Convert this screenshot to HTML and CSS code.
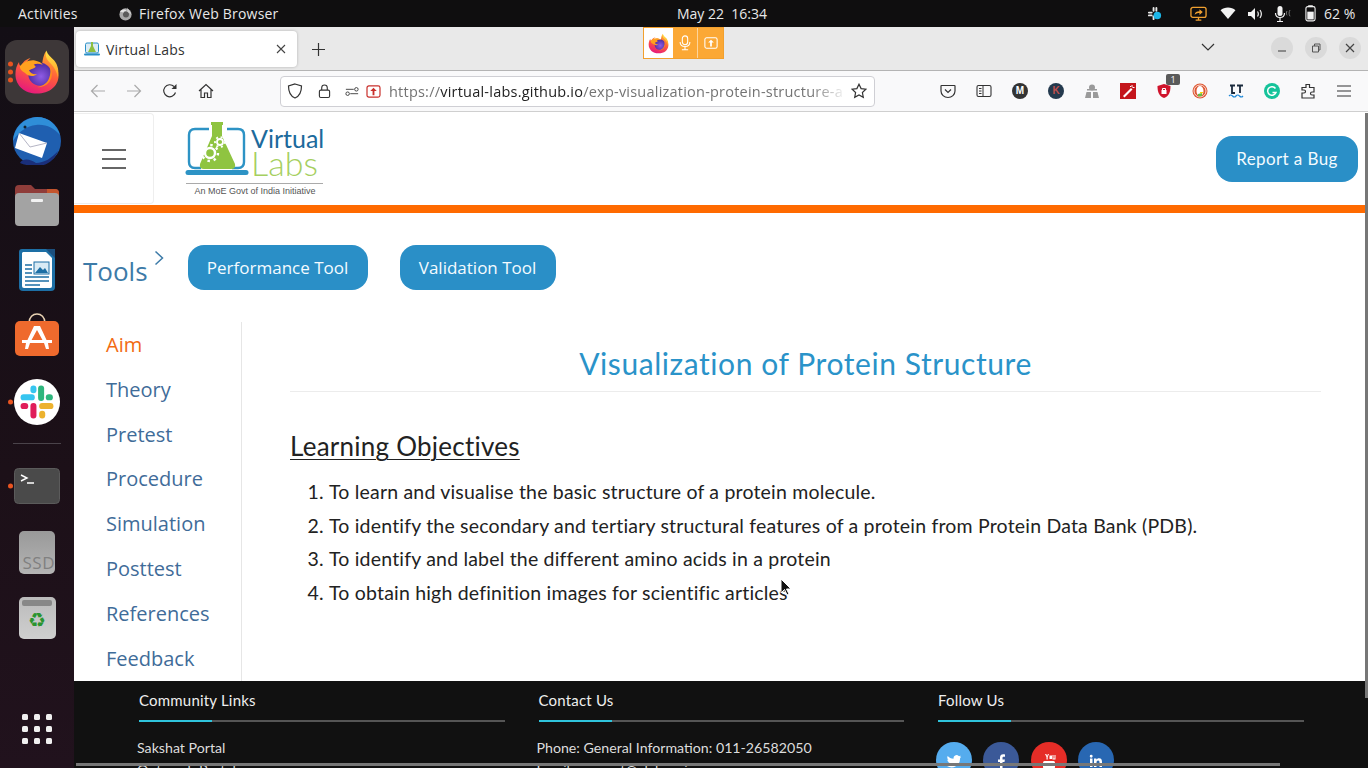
FILE: index.html
```html
<!DOCTYPE html>
<html lang="en">
<head>
  <meta charset="UTF-8" />
  <title>Virtual Labs</title>
  <link rel="stylesheet" href="styles.css">
</head>
<body>
  <!-- shared icons -->
  <svg class="defs" width="0" height="0" aria-hidden="true">
    <defs>
      <linearGradient id="ffBody" x1="0.7" y1="0" x2="0.3" y2="1">
        <stop offset="0" stop-color="#ffb02e"/>
        <stop offset="0.5" stop-color="#ff5a3c"/>
        <stop offset="1" stop-color="#e5177f"/>
      </linearGradient>
      <linearGradient id="ffFlame" x1="0.5" y1="0" x2="0.5" y2="1">
        <stop offset="0" stop-color="#ffe84a"/>
        <stop offset="1" stop-color="#ff9a25"/>
      </linearGradient>
      <radialGradient id="ffCore" cx="0.55" cy="0.6" r="0.6">
        <stop offset="0" stop-color="#8f5ce6"/>
        <stop offset="1" stop-color="#4b2a9e"/>
      </radialGradient>
      <symbol id="firefox" viewBox="0 0 64 64">
        <path d="M45 2c-1 7 3 10 8 15 6 6 9 14 9 20 0 15-13 25-30 25S2 51 2 35c0-7 2-13 5-17 0 3 1 5 3 6 2-6 7-10 13-11-4 3-6 6-6 7 8-4 16-3 22 2 1-8 2-14 6-20z" fill="url(#ffBody)"/>
        <path d="M45 2c-2 8 0 12 6 18 5 5 9 12 10 20 2-9 0-18-5-24C51 11 47 8 45 2z" fill="url(#ffFlame)"/>
        <circle cx="36" cy="35" r="16" fill="url(#ffCore)"/>
        <path d="M8 24c5-6 13-9 21-8 5 1 9 3 11 6-5-2-10-2-13 0 2 1 3 2 3 3-3 3-8 3-9 5 2 4 6 6 11 5-5 4-12 3-17-2C11 31 8 28 8 24z" fill="#ffa11f"/>
        <path d="M50 24c4 7 4 16-1 22-4 5-11 8-17 7 8-1 15-6 17-13 2-5 2-11 1-16z" fill="#ff8a1f"/>
      </symbol>
    </defs>
  </svg>

  <!-- top bar of the desktop -->
  <header class="topbar">
    <div class="topbar-left">
      <span class="activities">Activities</span>
      <svg class="topbar-ff" viewBox="0 0 16 16"><circle cx="8" cy="9" r="6.500" fill="#a9a9a9"/><circle cx="8.500" cy="9" r="3.200" fill="#5a5a5a"/><path d="M10 1c0 3 4 4 4 8l-4-3z" fill="#cfcfcf"/><path d="M2 6c2-3 6-3 7-1-2 0-3 1-3 2z" fill="#e2e2e2"/></svg>
      <span class="appname">Firefox Web Browser</span>
    </div>
    <div class="clock">May 22&nbsp; 16:34</div>
    <div class="tray">
      <svg class="tray-slack" viewBox="0 0 16 16"><g fill="#e8e8e8"><rect x="1" y="6" width="5" height="2" rx="1"/><rect x="6" y="1" width="2" height="5" rx="1"/><rect x="9" y="1" width="2" height="5" rx="1"/><rect x="1" y="9" width="5" height="2" rx="1"/><rect x="6" y="10" width="2" height="5" rx="1"/></g><circle cx="11" cy="10" r="4" fill="#1cb6e8"/></svg>
      <svg class="tray-share" viewBox="0 0 18 16"><rect x="1" y="1" width="16" height="10.500" rx="2" fill="none" stroke="#f0a030" stroke-width="1.400"/><path d="M5 9c0-3 2-4 5-4V3l3.500 3L10 9V7C8 7 6 7.500 5 9z" fill="#f0a030"/><path d="M6 14.500h6M9 12v2" stroke="#f0a030" stroke-width="1.400"/></svg>
      <svg class="tray-wifi" viewBox="0 0 16 14"><path d="M0 3.500C4-.5 12-.5 16 3.500L8 13z" fill="#f2f2f2"/></svg>
      <svg class="tray-vol" viewBox="0 0 16 14"><path d="M1 5h3l4-4v12L4 9H1z" fill="#f2f2f2"/><path d="M10.500 4.500c1 1.500 1 3.500 0 5M13 3c1.700 2.500 1.700 5.500 0 8" fill="none" stroke="#f2f2f2" stroke-width="1.200"/></svg>
      <svg class="tray-mic" viewBox="0 0 18 18"><rect x="3.500" y="1" width="5" height="10" rx="2.500" fill="#f2f2f2"/><path d="M1.500 8c0 3 2 4.500 4.500 4.500S10.500 11 10.500 8M6 12.500V16M3 16.500h6" fill="none" stroke="#f2f2f2" stroke-width="1.200"/><path d="M13 6c-.8 1.300-.8 3 0 4.300M16 5c-1.200 2-1.200 4.300 0 6.300" fill="none" stroke="#777" stroke-width="1"/></svg>
      <svg class="tray-bat" viewBox="0 0 12 18"><rect x="3.500" y="0" width="5" height="2" fill="#f2f2f2"/><rect x="1" y="1.500" width="10" height="15.500" rx="2" fill="none" stroke="#f2f2f2" stroke-width="1.200"/><rect x="2.500" y="7" width="7" height="8.500" fill="#f2f2f2"/></svg>
      <span class="battery">62 %</span>
    </div>
  </header>

  <div class="desktop">
    <!-- dock -->
    <nav class="dock">
      <div class="dock-slot is-active">
        <span class="run-dots"><i></i><i></i><i></i></span>
        <svg class="dock-ff"><use href="#firefox"/></svg>
      </div>
      <div class="dock-slot">
        <svg class="dock-icon dock-tb" viewBox="0 0 50 50">
          <circle cx="25" cy="26" r="24" fill="#1f5fb0"/>
          <path d="M1 26C2 12 12 3 25 2c12 0 20 8 23 18-6-7-14-11-24-10C15 11 7 16 1 26z" fill="#2f8ed8"/>
          <path d="M8 48c3-5 10-4 16 0 8 0 16-5 22-12-4 10-12 15-21 15-7 0-12-1-17-3z" fill="#1a2f7a"/>
          <path d="M7 18l28 10-5 15L3 33z" fill="#fff"/>
          <path d="M7 18l11 14 17-4" fill="none" stroke="#b5b5c5" stroke-width="1"/>
          <circle cx="13" cy="12" r="1.500" fill="#123"/>
        </svg>
      </div>
      <div class="dock-slot">
        <svg class="dock-icon" viewBox="0 0 46 46">
          <path d="M1 8q0-4 4-4h12l4 4h20q4 0 4 4v12H1z" fill="#8f3d3a"/>
          <path d="M33 8h8q4 0 4 4v10H33z" fill="#c4552d"/>
          <rect x="1" y="12" width="44" height="33" rx="4" fill="#a3a3a3"/>
          <rect x="17" y="18" width="12" height="3" rx="1" fill="#f2f2f2"/>
        </svg>
      </div>
      <div class="dock-slot">
        <svg class="dock-icon dock-writer" viewBox="0 0 38 44">
          <path d="M4 1h26l7 7v31q0 4-4 4H5q-4 0-4-4V4q0-3 3-3z" fill="#1d6fa5"/>
          <path d="M5 4h23l6 6v28q0 2-2 2H6q-2 0-2-2V5z" fill="#fff"/>
          <path d="M28 1l9 9V1z" fill="#1c4f7d"/>
          <path d="M7 17h7M7 21h7M7 25h7M7 29h24M7 33h24M7 37h15" stroke="#1d6fa5" stroke-width="1.600"/>
          <rect x="16" y="14" width="15" height="12" fill="#d9ebf5" stroke="#1d6fa5"/>
          <path d="M17 25l5-6 3 3 2-2 3 5z" fill="#1d6fa5"/>
        </svg>
      </div>
      <div class="dock-slot">
        <svg class="dock-icon" viewBox="0 0 46 46">
          <path d="M15 10c0-12 16-12 16 0" fill="none" stroke="#e9d3b4" stroke-width="1.500"/>
          <rect x="1" y="8" width="44" height="35" rx="5" fill="#ef6a2d"/>
          <path d="M20 13h6l7 15h-4l-6-11-6 11h-4z" fill="#fff"/>
          <rect x="8" y="27" width="30" height="3" fill="#fff"/>
          <path d="M12 30h4l-2 6h-3zM30 30h4l1 6h-3z" fill="#fff"/>
        </svg>
      </div>
      <div class="dock-slot">
        <span class="run-dots"><i></i></span>
        <svg class="dock-icon" viewBox="0 0 42 42">
          <circle cx="21" cy="21" r="21" fill="#fff"/>
          <rect x="6" y="14" width="13" height="5.500" rx="2.700" fill="#36c5f0"/>
          <rect x="15" y="6" width="5.500" height="7" rx="2.700" fill="#36c5f0"/>
          <rect x="22" y="6" width="5.500" height="14" rx="2.700" fill="#2eb67d"/>
          <rect x="29" y="14" width="6.500" height="5.500" rx="2.700" fill="#2eb67d"/>
          <rect x="23" y="22" width="13" height="5.500" rx="2.700" fill="#ecb22e"/>
          <rect x="23" y="29" width="5.500" height="7" rx="2.700" fill="#ecb22e"/>
          <rect x="15" y="22" width="5.500" height="14" rx="2.700" fill="#e01e5a"/>
          <rect x="6" y="22" width="7" height="5.500" rx="2.700" fill="#e01e5a"/>
        </svg>
      </div>
      <hr class="dock-sep" />
      <div class="dock-slot">
        <span class="run-dots"><i></i></span>
        <svg class="dock-icon" viewBox="0 0 46 36">
          <rect x="0.500" y="0.500" width="45" height="35" rx="4" fill="#4a4a4a" stroke="#5b5b5b"/>
          <path d="M7 7l6 3-6 3M13 15h7" fill="none" stroke="#fff" stroke-width="1.400"/>
        </svg>
      </div>
      <div class="dock-slot">
        <div class="ssd">SSD</div>
      </div>
      <div class="dock-slot">
        <div class="trash"><span class="trash-lid"></span><span class="recycle">♻</span></div>
      </div>
      <div class="dock-grid">
        <i></i><i></i><i></i><i></i><i></i><i></i><i></i><i></i><i></i>
      </div>
    </nav>

    <!-- firefox window -->
    <main class="window">
      <div class="tabbar">
        <div class="tab">
          <svg class="favicon" viewBox="0 0 16 16"><rect x="1.500" y="2" width="13" height="10" rx="1.500" fill="#dcecf5" stroke="#2a8fc7"/><path d="M7 1h2v4l3 6H4l3-6z" fill="#8dbf3f"/><rect x="0" y="12.500" width="16" height="2" rx="1" fill="#2a8fc7"/></svg>
          <span class="tab-title">Virtual Labs</span>
          <svg class="tab-close" viewBox="0 0 10 10"><path d="M1 1l8 8M9 1l-8 8" stroke="#444" stroke-width="1.100"/></svg>
        </div>
        <svg class="newtab" viewBox="0 0 12 12"><path d="M6 0v12M0 6h12" stroke="#333" stroke-width="1.100"/></svg>
        <svg class="tabs-down" viewBox="0 0 14 8"><path d="M1 1l6 6 6-6" fill="none" stroke="#333" stroke-width="1.200"/></svg>
        <div class="winctl">
          <span class="winbtn"><svg viewBox="0 0 10 10"><path d="M1 8h8" stroke="#555" stroke-width="1.200"/></svg></span>
          <span class="winbtn"><svg viewBox="0 0 10 10"><path d="M1.500 3h6v6h-6zM3.500 3V1h5.500v6H7.500" fill="none" stroke="#555"/></svg></span>
          <span class="winbtn"><svg viewBox="0 0 10 10"><path d="M1 1l8 8M9 1l-8 8" stroke="#444" stroke-width="1.200"/></svg></span>
        </div>
      </div>

      <div class="toolbar">
        <span class="tb-btn"><svg viewBox="0 0 16 16"><path d="M15 8H1.500M7.500 2l-6 6 6 6" fill="none" stroke="#aaa" stroke-width="1.200"/></svg></span>
        <span class="tb-btn"><svg viewBox="0 0 16 16"><path d="M1 8h13.500M8.500 2l6 6-6 6" fill="none" stroke="#aaa" stroke-width="1.200"/></svg></span>
        <span class="tb-btn"><svg viewBox="0 0 16 16"><path d="M13.500 9.500A6 6 0 1 1 12 3.500" fill="none" stroke="#333" stroke-width="1.200"/><path d="M14.500 1v5h-5z" fill="#333"/></svg></span>
        <span class="tb-btn"><svg viewBox="0 0 16 16"><path d="M1 8l7-6.500L15 8M3 6.500V14.500h3.500V10h3v4.500H13V6.500" fill="none" stroke="#333" stroke-width="1.200"/></svg></span>
        <div class="urlbar">
          <svg class="url-shield" viewBox="0 0 16 16"><path d="M8 1l6.500 2c0 6-1.500 10-6.500 12C3 13 1.500 9 1.500 3z" fill="none" stroke="#333" stroke-width="1.200"/></svg>
          <svg class="url-lock" viewBox="0 0 14 16"><rect x="1.500" y="7" width="11" height="8" rx="1.500" fill="none" stroke="#333" stroke-width="1.200"/><path d="M4 7V4.500a3 3 0 0 1 6 0V7" fill="none" stroke="#333" stroke-width="1.200"/></svg>
          <svg class="url-perm" viewBox="0 0 16 12"><path d="M1 3.500h9M6 8.500h9" stroke="#333"/><circle cx="13" cy="3.500" r="2" fill="none" stroke="#333"/><circle cx="3" cy="8.500" r="2" fill="none" stroke="#333"/></svg>
          <svg class="url-share" viewBox="0 0 16 14"><rect x="1" y="1" width="14" height="12" rx="2" fill="#fff" stroke="#c9302c" stroke-width="1.300"/><path d="M8 3l3.500 3.500h-2.500V11H7V6.500H4.500z" fill="#c9302c"/></svg>
          <div class="url-text">https://<b>virtual-labs.github.io</b>/exp-visualization-protein-structure-a</div>
          <svg class="url-star" viewBox="0 0 16 16"><path d="M8 1.200l2.100 4.400 4.800.6-3.500 3.300.9 4.800L8 12l-4.300 2.300.9-4.800L1.100 6.200l4.800-.6z" fill="none" stroke="#333" stroke-width="1.200"/></svg>
        </div>
        <div class="tb-right">
          <span class="tb-btn"><svg viewBox="0 0 16 16"><path d="M1.500 2.500h13q.5 0 .5 .5v5a7 6.500 0 0 1-14 0V3q0-.5 .5-.5z" fill="none" stroke="#333" stroke-width="1.200"/><path d="M5 6.500l3 3 3-3" fill="none" stroke="#333" stroke-width="1.200"/></svg></span>
          <span class="tb-btn"><svg viewBox="0 0 16 14"><rect x="1" y="1.500" width="14" height="11" rx="1.500" fill="none" stroke="#333" stroke-width="1.100"/><path d="M7 1.500v11M3 4.500h2.500M3 7h2.500M3 9.500h2.500" stroke="#333"/></svg></span>
          <span class="tb-btn"><span class="ext-round ext-m">M</span></span>
          <span class="tb-btn"><span class="ext-round ext-k">K</span></span>
          <span class="tb-btn"><svg viewBox="0 0 16 16" fill="#9a9a9a"><circle cx="8" cy="4.500" r="3"/><rect x="3" y="6" width="10" height="1.500"/><path d="M1 15l1.500-6h4.500v6zM15 15l-1.500-6H9v6z"/></svg></span>
          <span class="tb-btn"><svg viewBox="0 0 16 16"><rect width="16" height="16" fill="#c4161c"/><path d="M3 13L11 5l1.500 1.500-8 8z" fill="#fff"/><path d="M12 2v2M14.500 4.500h-2M10 3l1 1" stroke="#fff"/></svg></span>
          <span class="tb-btn ext-ublock">
            <svg viewBox="0 0 16 16"><path d="M8 1l6.500 2c0 6-1.500 10-6.500 12C3 13 1.500 9 1.500 3z" fill="#d0142c"/><rect x="5.500" y="7" width="5" height="4" fill="#fff"/><path d="M6.500 7V5.500h3V7" fill="none" stroke="#fff"/></svg>
            <span class="badge">1</span>
          </span>
          <span class="tb-btn"><svg viewBox="0 0 16 16"><circle cx="8" cy="8" r="7.500" fill="#de5833"/><circle cx="8" cy="8" r="6" fill="none" stroke="#fff" stroke-width=".8"/><ellipse cx="8" cy="8" rx="3.500" ry="5" fill="#fff"/><path d="M6 11l4-1v3l-4 .5z" fill="#65bc46"/><path d="M8 9h3v1.200H8z" fill="#fdd20a"/></svg></span>
          <span class="tb-btn"><svg viewBox="0 0 16 16"><path d="M2 2.500h5M4 2.500V10h3M9 2.500h6M12 2.500V10" fill="none" stroke="#1b2b3d" stroke-width="1.800"/><path d="M1 13q1.700-2 3.500 0t3.500 0 3.500 0 3.500 0" fill="none" stroke="#1e88d8" stroke-width="1.200"/></svg></span>
          <span class="tb-btn"><svg viewBox="0 0 16 16"><circle cx="8" cy="8" r="8" fill="#15c39a"/><path d="M11.500 5.500A4.300 4.300 0 1 0 12 9.500H8.500" fill="none" stroke="#fff" stroke-width="1.500"/></svg></span>
          <span class="tb-btn"><svg viewBox="0 0 16 16"><path d="M6 1.500h3.500v3H14V9h-2a1.500 1.500 0 0 0 0 3h2v3H2v-5h2a1.500 1.500 0 0 0 0-3H2V4.500h4z" fill="none" stroke="#333" stroke-width="1.200"/></svg></span>
          <span class="tb-btn"><svg viewBox="0 0 16 14"><path d="M1 2h14M1 7h14M1 12h14" stroke="#333" stroke-width="1.200"/></svg></span>
        </div>
      </div>

      <div class="page">
        <div class="site-header">
          <div class="burger-cell"><div class="burger"><i></i><i></i><i></i></div></div>
          <svg class="logo" viewBox="0 0 140 78">
            <path d="M24 9H10q-6 0-6 6v27q0 6 6 6h6M42 9h11q6 0 6 6v27q0 6-6 6h-6" fill="none" stroke="#2d93c5" stroke-width="2.400"/>
            <path d="M3 52.500h58" stroke="#2d93c5" stroke-width="5" stroke-linecap="round"/>
            <path d="M26 2h12v3h-1v11l13 28q1 5-4 5H19q-5 0-4-5l12-28V5h-1z" fill="#8fc441"/>
            <circle cx="25" cy="33" r="5" fill="none" stroke="#fff" stroke-width="2.400"/>
            <circle cx="25" cy="33" r="8" fill="none" stroke="#fff" stroke-width="2.400" stroke-dasharray="2.500 3.780"/>
            <circle cx="35" cy="22" r="3" fill="none" stroke="#fff" stroke-width="1.800"/>
            <circle cx="35" cy="22" r="5" fill="none" stroke="#fff" stroke-width="1.800" stroke-dasharray="2 2.720"/>
            <text x="66" y="28" class="logo-virtual">Virtual</text>
            <text x="66" y="56" class="logo-labs">Labs</text>
            <path d="M1 63.500h137" stroke="#aaa"/>
            <text x="70" y="73.500" text-anchor="middle" class="logo-tag">An MoE Govt of India Initiative</text>
          </svg>
          <a class="btn btn-bug">Report a Bug</a>
        </div>
        <div class="orange-bar"></div>

        <div class="tools-row">
          <span class="tools-label">Tools</span>
          <svg class="tools-chev" viewBox="0 0 10 16"><path d="M1.500 1.500l7 6.500-7 6.500" fill="none" stroke="#3d7ba8" stroke-width="1.500"/></svg>
          <a class="btn btn-tool btn-perf">Performance Tool</a>
          <a class="btn btn-tool btn-valid">Validation Tool</a>
        </div>

        <div class="main-row">
          <aside class="sidebar">
            <a class="side-link is-current">Aim</a>
            <a class="side-link">Theory</a>
            <a class="side-link">Pretest</a>
            <a class="side-link">Procedure</a>
            <a class="side-link">Simulation</a>
            <a class="side-link">Posttest</a>
            <a class="side-link">References</a>
            <a class="side-link">Feedback</a>
          </aside>
          <section class="content">
            <h1 class="exp-title">Visualization of Protein Structure</h1>
            <h2 class="section-title">Learning Objectives</h2>
            <ol class="objectives">
              <li>To learn and visualise the basic structure of a protein molecule.</li>
              <li>To identify the secondary and tertiary structural features of a protein from Protein Data Bank (PDB).</li>
              <li>To identify and label the different amino acids in a protein</li>
              <li>To obtain high definition images for scientific articles</li>
            </ol>
          </section>
        </div>

        <footer class="footer">
          <div class="foot-col">
            <h3 class="foot-head">Community Links</h3>
            <p class="foot-text">Sakshat Portal</p>
            <p class="foot-text">Outreach Portal</p>
          </div>
          <div class="foot-col">
            <h3 class="foot-head">Contact Us</h3>
            <p class="foot-text">Phone: General Information: 011-26582050</p>
            <p class="foot-text">Email: support@vlab.co.in</p>
          </div>
          <div class="foot-col">
            <h3 class="foot-head">Follow Us</h3>
            <div class="socials">
              <span class="social s-tw"><svg viewBox="0 0 16 16"><path d="M15 3.500c-.6.300-1.200.400-1.700.500.600-.4 1-.9 1.300-1.600-.6.300-1.200.6-1.900.7a3 3 0 0 0-5.100 2.700C5 5.700 3 4.600 1.700 3c-.8 1.400-.4 3 .9 3.900-.5 0-1-.1-1.300-.4 0 1.500 1 2.700 2.400 3-.4.100-.9.100-1.300 0 .4 1.200 1.500 2 2.800 2.100A6 6 0 0 1 1 13a8.500 8.500 0 0 0 13-7.600c.4-.5.800-1.200 1-1.900z" fill="#fff"/></svg></span>
              <span class="social s-fb"><svg viewBox="0 0 16 16"><path d="M9.500 15V9h2l.4-2.500H9.500V5c0-.8.300-1.200 1.200-1.200H12V1.500C11.700 1.400 11 1.300 10.200 1.300 8.300 1.300 7 2.500 7 4.600v1.900H5V9h2v6z" fill="#fff"/></svg></span>
              <span class="social s-yt"><svg viewBox="0 0 16 16"><path d="M4 1h1.300l.8 2 .8-2H8L6.700 4v2.500H5.500V4zM8.500 2.500h2.500V6H8.500zM11.500 2h1v3.500h1V2h1v4.500h-3z" fill="#fff"/><rect x="2" y="8" width="12" height="7.500" rx="1.500" fill="#fff"/></svg></span>
              <span class="social s-in"><svg viewBox="0 0 16 16"><path d="M2 5.500h2.500V14H2zM3.200 1.800a1.400 1.400 0 1 1 0 2.900 1.400 1.400 0 0 1 0-2.900zM6 5.500h2.400v1.200c.5-.8 1.400-1.400 2.600-1.400 2.400 0 3 1.600 3 3.700V14h-2.500V9.500c0-1-.2-2-1.400-2S8.500 8.500 8.500 9.500V14H6z" fill="#fff"/></svg></span>
            </div>
          </div>
        </footer>

        <span class="scroll-v"></span>
        <span class="scroll-h"></span>
        <svg class="cursor" viewBox="0 0 12 18"><path d="M1 1v14l3.500-3.500 2.500 5.500 2-1-2.500-5H11z" fill="#111" stroke="#fff" stroke-width="1"/></svg>
      </div>

      <!-- sharing indicator lies over the tab bar -->
      <div class="share-ind">
        <span class="share-ff"><svg><use href="#firefox"/></svg></span>
        <span class="share-cell"><svg viewBox="0 0 14 18"><rect x="4" y="1" width="6" height="10" rx="3" fill="none" stroke="#fff" stroke-width="1.200"/><path d="M1.500 8c0 3.500 2.500 5 5.500 5s5.500-1.500 5.500-5M7 13v3M3.500 16.500h7" fill="none" stroke="#fff" stroke-width="1.200"/></svg></span>
        <span class="share-cell share-last"><svg viewBox="0 0 16 14"><rect x="1" y="1" width="14" height="12" rx="2" fill="none" stroke="#fff" stroke-width="1.200"/><path d="M8 3.200l3.300 3.300H9V11H7V6.500H4.700z" fill="#fff"/></svg></span>
      </div>
    </main>
  </div>
</body>
</html>
```

FILE: styles.css
```css
/* base */
html, body {
  margin: 0;
  padding: 0;
  height: 100%;
  overflow: hidden;
}
* {
  box-sizing: border-box;
}
body {
  display: flex;
  flex-direction: column;
  font-family: "Open Sans", "Noto Sans", sans-serif;
  background: #120d12;
}
.defs {
  position: absolute;
}
svg {
  display: block;
}

/* top bar */
.topbar {
  height: 27px;
  flex: none;
  display: flex;
  align-items: center;
  background: #0f0e0f;
  color: #e8e8e8;
  font-size: 14px;
}
.topbar-left {
  width: 677px;
  padding-left: 18px;
  display: flex;
  align-items: center;
  letter-spacing: 0.200px;
}
.activities {
  width: 100px;
}
.topbar-ff {
  width: 15px;
  height: 15px;
  margin-right: 6px;
}
.clock {
  width: 100px;
  text-align: left;
  white-space: nowrap;
}
.tray {
  flex: 1;
  display: flex;
  align-items: center;
  padding-left: 370px;
}
.tray-slack { width: 15px; height: 15px; }
.tray-share { width: 17px; height: 16px; margin-left: 28px; }
.tray-wifi { width: 16px; height: 13px; margin-left: 13px; }
.tray-vol { width: 16px; height: 14px; margin-left: 11px; }
.tray-mic { width: 18px; height: 18px; margin-left: 11px; }
.tray-bat { width: 11px; height: 17px; margin-left: 13px; }
.battery { margin-left: 8px; }

/* dock */
.desktop {
  flex: 1;
  display: flex;
  min-height: 0;
}
.dock {
  width: 74px;
  flex: none;
  display: flex;
  flex-direction: column;
  align-items: center;
  padding-top: 12px;
  background: linear-gradient(180deg, #130e15 0%, #1c1018 60%, #21121d 100%);
}
.dock-slot {
  position: relative;
  width: 64px;
  height: 66px;
  display: flex;
  align-items: center;
  justify-content: center;
}
.dock-slot.is-active {
  height: 64px;
  margin: 1px 0;
  background: #3d3738;
  border-radius: 12px;
}
.dock-icon {
  width: 46px;
  height: 46px;
}
.dock-ff {
  width: 46px;
  height: 46px;
}
.dock-tb {
  width: 50px;
  height: 50px;
  margin-top: 3px;
}
.dock-writer {
  width: 38px;
  height: 44px;
}
.run-dots {
  position: absolute;
  left: 3px;
  top: 50%;
  transform: translateY(-50%);
  display: flex;
  flex-direction: column;
  gap: 3px;
}
.run-dots i {
  width: 5px;
  height: 5px;
  border-radius: 50%;
  background: #e95420;
}
.dock-sep {
  width: 48px;
  margin: 8px 0 9px;
  border: none;
  border-top: 1px solid #4a434a;
}
.ssd {
  width: 36px;
  height: 43px;
  border-radius: 5px;
  background: linear-gradient(#999, #b4b4b4);
  color: #808080;
  font-size: 17px;
  line-height: 20px;
  text-align: right;
  padding: 22px 0 0;
  overflow: hidden;
  letter-spacing: 0.500px;
}
.trash {
  width: 37px;
  height: 42px;
  border-radius: 5px;
  background: linear-gradient(#bbb, #cfcfcf);
  display: flex;
  flex-direction: column;
  align-items: center;
  padding-top: 3px;
}
.trash-lid {
  width: 30px;
  height: 6px;
  border-radius: 2px;
  background: #888;
}
.recycle {
  font-family: "DejaVu Sans", sans-serif;
  font-size: 20px;
  line-height: 28px;
  color: #2a942e;
}
.dock-grid {
  margin-top: auto;
  margin-bottom: 24px;
  display: grid;
  grid-template-columns: repeat(3, 6px);
  gap: 6px;
}
.dock-grid i {
  width: 6px;
  height: 6px;
  border-radius: 1.500px;
  background: #f0f0f0;
}

/* firefox window */
.window {
  position: relative;
  flex: 1;
  min-width: 0;
  display: flex;
  flex-direction: column;
  background: #fff;
}
.tabbar {
  height: 44px;
  flex: none;
  display: flex;
  align-items: center;
  background: #e9e9e9;
  border-bottom: 1px solid #b4b4b4;
  padding: 0 7px 0 2px;
}
.tab {
  width: 221px;
  height: 36px;
  display: flex;
  align-items: center;
  padding: 0 11px 0 8px;
  background: #fff;
  border-radius: 4px;
  box-shadow: 0 0 3px rgba(0,0,0,0.25);
  margin-top: 1px;
}
.favicon {
  width: 16px;
  height: 16px;
  margin-right: 6px;
}
.tab-title {
  flex: 1;
  font-size: 14px;
  color: #333;
  letter-spacing: 0.200px;
}
.tab-close {
  width: 10px;
  height: 10px;
}
.newtab {
  width: 13px;
  height: 13px;
  margin-left: 15px;
  margin-top: 1px;
}
.tabs-down {
  width: 14px;
  height: 8px;
  margin-left: 876px;
  margin-top: -3px;
}
.winctl {
  margin-left: auto;
  display: flex;
  gap: 12px;
  margin-top: -2px;
}
.winbtn {
  width: 22px;
  height: 22px;
  border-radius: 50%;
  background: #dadada;
  display: flex;
  align-items: center;
  justify-content: center;
}
.winbtn svg {
  width: 10px;
  height: 10px;
}
.toolbar {
  height: 41px;
  flex: none;
  display: flex;
  align-items: center;
  padding-left: 6px;
  background: #f9f9fa;
  border-bottom: 1px solid #cfcfcf;
}
.tb-btn {
  position: relative;
  width: 36px;
  height: 32px;
  flex: none;
  display: flex;
  align-items: center;
  justify-content: center;
}
.tb-btn svg {
  width: 16px;
  height: 16px;
}
.urlbar {
  width: 595px;
  height: 31px;
  margin-left: 56px;
  display: flex;
  align-items: center;
  background: #fff;
  border: 1px solid #cfcfd4;
  border-radius: 4px;
}
.urlbar svg {
  flex: none;
}
.url-shield { width: 16px; height: 16px; margin-left: 6px; }
.url-lock { width: 13px; height: 16px; margin-left: 15px; }
.url-perm { width: 14px; height: 11px; margin-left: 14px; }
.url-share { width: 15px; height: 13px; margin-left: 7px; }
.url-text {
  flex: 1;
  margin-left: 8px;
  font-size: 14.500px;
  letter-spacing: 0.220px;
  color: #737373;
  white-space: nowrap;
  overflow: hidden;
  -webkit-mask-image: linear-gradient(90deg, #000 92%, transparent);
  mask-image: linear-gradient(90deg, #000 92%, transparent);
}
.url-text b {
  font-weight: 400;
  color: #222;
}
.url-star { width: 16px; height: 16px; margin: 0 7px 0 4px; }
.tb-right {
  margin-left: auto;
  display: flex;
  padding-right: 6px;
}
.ext-round {
  width: 16px;
  height: 16px;
  border-radius: 50%;
  font-size: 10px;
  font-weight: 700;
  line-height: 16px;
  text-align: center;
  font-family: "Liberation Sans", sans-serif;
}
.ext-m { background: #333; color: #fff; }
.ext-k { background: #243a4e; color: #c0504d; }
.badge {
  position: absolute;
  top: -1px;
  right: 2px;
  width: 14px;
  height: 11px;
  border-radius: 2px;
  background: #5a5a5a;
  color: #fff;
  font-size: 9px;
  line-height: 11px;
  text-align: center;
}
.share-ind {
  position: absolute;
  left: 569px;
  top: 0;
  width: 81px;
  height: 32px;
  display: flex;
  background: #fba835;
  border: 1px solid #f2a02e;
}
.share-ff {
  width: 29px;
  display: flex;
  align-items: center;
  justify-content: center;
  background: #fff;
}
.share-ff svg {
  width: 21px;
  height: 21px;
}
.share-cell {
  width: 25px;
  display: flex;
  align-items: center;
  justify-content: center;
  border-right: 1px solid #fdd49a;
}
.share-cell svg {
  width: 14px;
  height: 16px;
}
.share-last {
  border-right: none;
}

/* page inside the browser */
.page {
  position: relative;
  flex: 1;
  min-height: 0;
  display: flex;
  flex-direction: column;
  overflow: hidden;
  background: #fff;
}
.site-header {
  height: 93px;
  flex: none;
  display: flex;
  align-items: center;
}
.burger-cell {
  width: 80px;
  height: 91px;
  display: flex;
  align-items: center;
  justify-content: center;
  border: 1px solid #eee;
  border-left: none;
  border-radius: 0 4px 4px 0;
}
.burger {
  width: 24px;
  display: flex;
  flex-direction: column;
  gap: 7px;
}
.burger i {
  height: 2px;
  background: #666;
}
.logo {
  width: 140px;
  height: 78px;
  margin-left: 31px;
}
.logo-virtual {
  font: 400 25px "Lato", sans-serif;
  fill: #1c6a9c;
}
.logo-labs {
  font: 300 34px "Lato", sans-serif;
  fill: #a6cf5f;
}
.logo-tag {
  font: 400 9px "Liberation Sans", sans-serif;
  fill: #555;
}
.btn {
  display: flex;
  align-items: center;
  justify-content: center;
  background: #2a8fc7;
  color: #f4fbff;
  border-radius: 16px;
}
.btn-bug {
  width: 142px;
  height: 46px;
  margin-left: auto;
  margin-right: 10px;
  font: 400 17px "Lato", sans-serif;
  letter-spacing: 0.400px;
}
.orange-bar {
  height: 8px;
  flex: none;
  background: #ff6a00;
}
.tools-row {
  height: 109px;
  flex: none;
  display: flex;
  align-items: flex-start;
  padding: 32px 0 0 9px;
}
.tools-label {
  font-size: 26px;
  line-height: 52px;
  color: #3d7ba8;
}
.tools-chev {
  width: 10px;
  height: 16px;
  margin: 5px 0 0 6px;
}
.btn-tool {
  height: 45px;
  font-size: 17px;
}
.btn-perf {
  width: 180px;
  margin-left: 24px;
}
.btn-valid {
  width: 156px;
  margin-left: 32px;
}
.main-row {
  height: 359px;
  flex: none;
  display: flex;
}
.sidebar {
  width: 168px;
  flex: none;
  display: flex;
  flex-direction: column;
  padding: 1px 0 0 32px;
  border-right: 1px solid #e6e6e6;
}
.side-link {
  height: 44.800px;
  flex: none;
  line-height: 44.800px;
  font-size: 20px;
  color: #3f6c99;
}
.side-link.is-current {
  color: #f26a12;
}
.content {
  flex: 1;
  padding: 0 47px 0 48px;
  font-family: "Lato", sans-serif;
  color: #222;
}
.exp-title {
  margin: 0;
  height: 70px;
  line-height: 82px;
  border-bottom: 1px solid #ececec;
  text-align: center;
  font-size: 30px;
  font-weight: 400;
  color: #2a93c9;
  letter-spacing: 0.570px;
}
.section-title {
  margin: 34px 0 0;
  font-size: 26px;
  line-height: 40px;
  font-weight: 400;
  letter-spacing: 0.250px;
  text-decoration: underline;
  text-underline-offset: 3px;
  text-decoration-thickness: 1px;
}
.objectives {
  margin: 9px 0 0;
  padding-left: 39px;
  font-size: 19.500px;
  line-height: 33.700px;
  letter-spacing: 0.190px;
}

/* footer */
.footer {
  flex: 1;
  display: flex;
  gap: 34px;
  padding: 0 0 0 65px;
  background: #111;
  color: #eee;
  font-family: "Lato", sans-serif;
}
.foot-col {
  width: 365.500px;
}
.foot-head {
  position: relative;
  margin: 0;
  height: 41px;
  line-height: 38px;
  font-size: 15px;
  font-weight: 400;
  letter-spacing: 0.200px;
  border-bottom: 2px solid #555;
}
.foot-head::after {
  content: "";
  position: absolute;
  left: 0;
  bottom: -2px;
  width: 73px;
  height: 2px;
  background: #2fc4dc;
}
.foot-text {
  margin: 0 0 0 -2px;
  font-size: 14.200px;
  line-height: 22px;
  color: #ddd;
}
.foot-head + .foot-text {
  margin-top: 15px;
}
.socials {
  display: flex;
  gap: 11.300px;
  margin: 20px 0 0 -2px;
}
.social {
  width: 36px;
  height: 36px;
  border-radius: 50%;
  display: flex;
  align-items: center;
  justify-content: center;
}
.social svg {
  width: 16px;
  height: 16px;
  margin-top: 1px;
}
.s-tw { background: #55acee; }
.s-fb { background: #3b5998; }
.s-yt { background: #e52d27; }
.s-in { background: #2867b2; }

/* scrollbars and the pointer lie over the page */
.scroll-v {
  position: absolute;
  right: 0;
  top: 1px;
  width: 3px;
  height: 585px;
  background: #777;
}
.scroll-h {
  position: absolute;
  left: 2px;
  bottom: 2px;
  width: 1204px;
  height: 3px;
  background: #777;
}
.cursor {
  position: absolute;
  left: 706px;
  top: 466px;
  width: 12px;
  height: 18px;
}
```
